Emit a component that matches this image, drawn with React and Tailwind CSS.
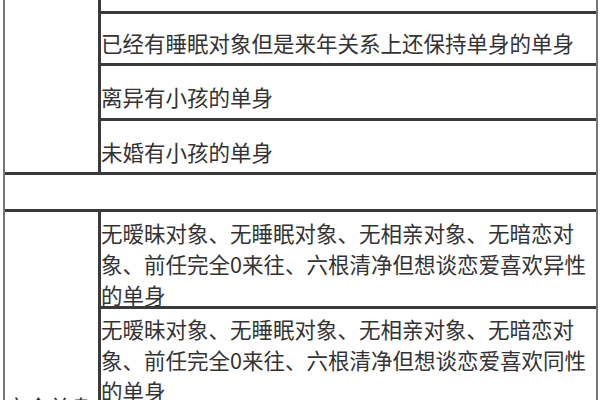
import React from "react";

const font = { fontFamily: '"Noto Sans CJK SC", "Noto Sans", sans-serif' };

const Row = ({ className = "", children }) => (
    <div className={`flex items-center pt-[10px] pr-[4px] ${className}`}>{children}</div>
);

const Para = ({ className = "", children }) => (
    <div className={`pr-[4px] leading-[31px] ${className}`}>{children}</div>
);

export default function App() {
    return <div className="w-[600px] h-[400px] overflow-hidden bg-white">
        <div className="ml-[3px] w-[595px] border-l-2 border-r-2 border-[#777] text-[21.5px] text-[#333] -mt-[40px]" style={font}>
            {/* upper block */}
            <div className="flex border-b-[3px] border-[#3a3a3a]">
                <div className="w-[93px]"></div>
                <div className="flex-1 border-l-[3px] border-[#3a3a3a] flex flex-col">
                    <div className="h-[54px] border-b-[3px] border-[#3a3a3a]"></div>
                    <Row className="h-[52px] border-b-[3px] border-[#3a3a3a] pt-[6px]">已经有睡眠对象但是来年关系上还保持单身的单身</Row>
                    <Row className="h-[55px] border-b-[3px] border-[#3a3a3a]">离异有小孩的单身</Row>
                    <Row className="h-[51px] pt-[12px]">未婚有小孩的单身</Row>
                </div>
            </div>

            {/* empty row */}
            <div className="h-[37px] border-b-[3px] border-[#3a3a3a]"></div>

            {/* lower block */}
            <div className="flex h-[240px]">
                <div className="w-[93px] pl-[1px] pt-[179px] leading-[31px] whitespace-nowrap">完全单身</div>
                <div className="flex-1 border-l-[3px] border-[#3a3a3a] flex flex-col">
                    <Para className="h-[97px] border-b-[3px] border-[#3a3a3a] pt-[5px]">
                        无暧昧对象、无睡眠对象、无相亲对象、无暗恋对象、前任完全0来往、六根清净但想谈恋爱喜欢异性的单身
                    </Para>
                    <Para className="flex-1 pt-[4px]">
                        无暧昧对象、无睡眠对象、无相亲对象、无暗恋对象、前任完全0来往、六根清净但想谈恋爱喜欢同性的单身
                    </Para>
                </div>
            </div>
        </div>
    </div>;
}
